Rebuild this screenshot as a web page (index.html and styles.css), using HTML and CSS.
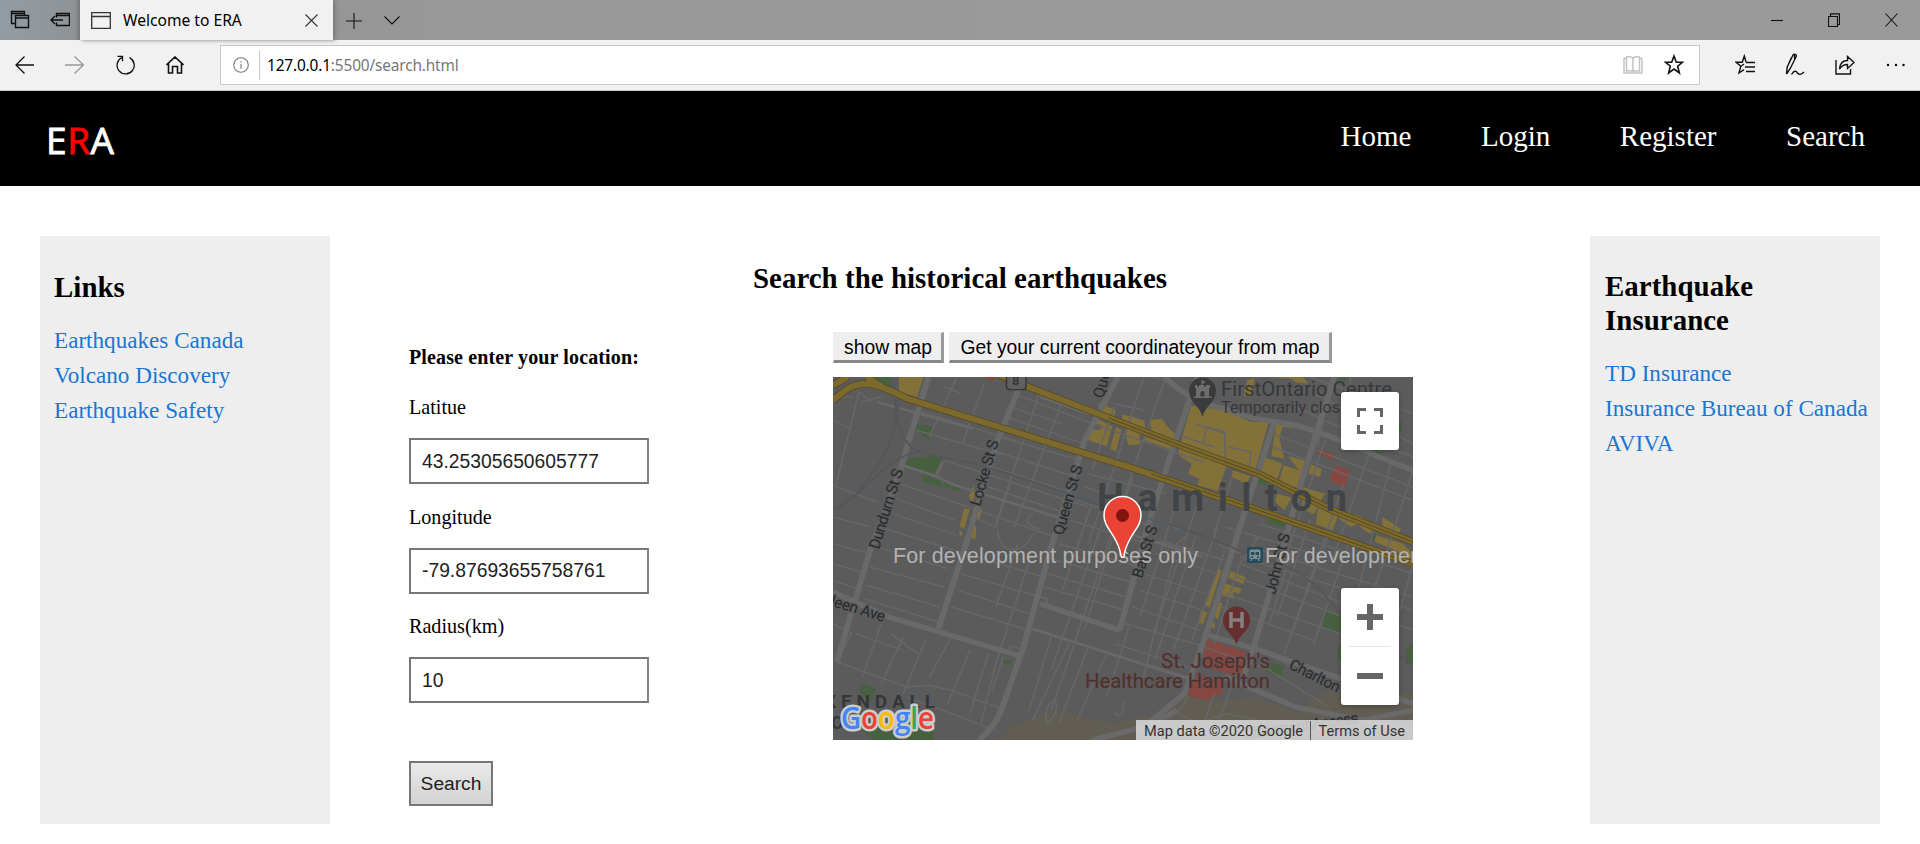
FILE: index.html
```html
<!DOCTYPE html>
<html lang="en">
<head>
<meta charset="utf-8">
<title>Welcome to ERA</title>
<link rel="stylesheet" href="styles.css">
</head>
<body>
<div class="tabbar">
  <div class="tab-tools">
    <svg width="20" height="20" viewBox="0 0 20 20" class="ico"><path d="M5 13.500H1.500V1.500H14.500V5M1.500 3.500H14.500M5.500 5.500H18.500V17.500H5.500ZM5.500 8H18.500" stroke-width="1.400"/></svg>
    <svg width="20" height="20" viewBox="0 0 20 20" class="ico"><path d="M6.500 7.500V3.500H19.500V15.500H6.500V12.500M6.500 5.500H19.500M1 10H13M5 6L1 10L5 14" stroke-width="1.400"/></svg>
  </div>
  <div class="tab">
    <svg width="20" height="17" viewBox="0 0 20 17" class="ico"><path d="M.7.7H19.300V16.300H.7ZM.7 4.500H19.300" stroke-width="1.300"/></svg>
    <span class="tab-title">Welcome to ERA</span>
    <svg width="13" height="13" viewBox="0 0 13 13" class="ico"><path d="M.5.5L12.500 12.500M12.500.5L.5 12.500"/></svg>
  </div>
  <svg width="16" height="16" viewBox="0 0 16 16" class="ico plus"><path d="M8 0V16M0 8H16"/></svg>
  <svg width="16" height="9" viewBox="0 0 16 9" class="ico chev"><path d="M.5.5L8 8L15.500.5"/></svg>
  <div class="win">
    <svg width="12" height="12" viewBox="0 0 12 12" class="ico"><path d="M0 6.500H12"/></svg>
    <svg width="12" height="14" viewBox="0 0 12 14" class="ico"><path d="M.5 3.500H9.500V13.500H.5ZM2.500 3.500V.9H11.500V11.500H9.500"/></svg>
    <svg width="13" height="14" viewBox="0 0 13 14" class="ico"><path d="M.5.5L12.500 13.500M12.500.5L.5 13.500"/></svg>
  </div>
</div>
<div class="toolbar">
  <div class="navkeys">
    <svg width="20" height="18" viewBox="0 0 20 18" class="ico"><path d="M.8 9H19M9.500.5L1 9L9.500 17.500" stroke-width="1.300"/></svg>
    <svg width="20" height="18" viewBox="0 0 20 18" class="ico dim"><path d="M0 9H18.200M9.500.5L18.500 9L9.500 17.500" stroke-width="1.300"/></svg>
    <svg width="20" height="20" viewBox="0 0 20 20" class="ico"><path d="M13.500 2.600A8.600 8.600 0 1 1 6 2.500M1.500 1.300H6.500V6.300" stroke-width="1.300"/></svg>
    <svg width="18" height="18" viewBox="0 0 18 18" class="ico"><path d="M.5 9L9 1L17.500 9M2.500 7.500V17H6.500V10.500H11.500V17H15.500V7.500" stroke-width="1.600"/></svg>
  </div>
  <div class="address">
    <svg width="16" height="16" viewBox="0 0 16 16" class="ico info"><circle cx="8" cy="8" r="7.300"/><path d="M8 7V12M8 4V5.500"/></svg>
    <span class="sep"></span>
    <span class="url"><b>127.0.0.1</b>:5500/search.html</span>
    <svg width="20" height="18" viewBox="0 0 20 18" class="ico book"><path d="M10 2V15M10 2C8 .7 5 .7 3.500 1V15C6 14.500 8 14.700 10 15.500C12 14.700 14 14.500 16.500 15V1C15 .7 12 .7 10 2M3.500 2.500H1V17H19V2.500H16.500"/></svg>
    <svg width="20" height="22" viewBox="0 0 20 22" class="ico star"><path d="M10 2L12.300 8.200H18.600L13.700 12.200L15.400 19L10 15.100L4.600 19L6.300 12.200L1.400 8.200H7.700Z" stroke-width="1.600"/></svg>
  </div>
  <div class="tools">
    <svg width="20" height="22" viewBox="0 0 20 22" class="ico"><path d="M11 8L9.300 2L7.300 8.300H1.200L5.800 12.300L4 19L9 15.700M11 8.500H20M10 13H20M11 17.500H20M6.500 12L9 10" stroke-width="1.400"/></svg>
    <svg width="20" height="24" viewBox="0 0 20 24" class="ico"><path d="M1.500 21L2.200 14L8 2C9 .5 12 1.500 11.200 3.500L5 16L1.500 21M6.500 4.500L3.500 11M9.500 2V6M6.500 21.500C9 17.500 11 17.500 12.500 20C14 22 16 22 19 19" stroke-width="1.400"/></svg>
    <svg width="20" height="20" viewBox="0 0 20 20" class="ico"><path d="M1 5V19H15.500V14M4.500 14C5 8 8 5.500 12.500 5.500V1.500L19 7.500L12.500 13.500V9.500C9 9.500 6.500 11 4.500 14Z" stroke-width="1.400"/></svg>
    <svg width="20" height="4" viewBox="0 0 20 4" class="dots"><circle cx="2" cy="2" r="1.200"/><circle cx="10" cy="2" r="1.200"/><circle cx="17.500" cy="2" r="1.200"/></svg>
  </div>
</div>
<header class="site">
  <div class="logo"><span>E</span><span class="red">R</span><span>A</span></div>
  <nav><a>Home</a><a>Login</a><a>Register</a><a>Search</a></nav>
</header>
<main>
  <aside class="left">
    <h2>Links</h2>
    <a>Earthquakes Canada</a><a>Volcano Discovery</a><a>Earthquake Safety</a>
  </aside>
  <section class="content">
    <h2 class="title">Search the historical earthquakes</h2>
    <div class="cols">
      <form>
        <p class="lead">Please enter your location:</p>
        <label>Latitue</label><input type="text" value="43.25305650605777">
        <label>Longitude</label><input type="text" value="-79.87693655758761">
        <label>Radius(km)</label><input type="text" value="10">
        <button type="button" class="go">Search</button>
      </form>
      <div class="mapcol">
        <div class="mapbtns"><button type="button" class="b1">show map</button><button type="button" class="b2">Get your current coordinateyour from map</button></div>
        <div class="map">
          <svg class="geo" width="580" height="363" viewBox="0 0 1568 1089" preserveAspectRatio="none">
            <rect width="1568" height="1089" fill="#5b5b5b"/>
            <g fill="#625d53">
              <path d="M450 1089L480 1050L590 1000L640 1010L760 1040L870 1010L960 950L1060 970L1150 960L1260 1010L1300 960L1400 920L1568 950V1089Z"/>
            </g>
            <g fill="#47603f">
              <path d="M93 0H158V32L130 25Z M228 140L268 150L262 190L222 160Z M192 262L210 242L297 236L280 298Z M245 292L290 312L295 330L240 312Z M300 314L318 320L315 333L298 327Z M322 325L344 332L338 343L320 337Z M458 845L482 850L480 865L460 858Z M78 918L115 932L105 975L72 945Z M1155 300L1180 310L1170 325L1140 315Z M1178 418L1225 430L1218 450L1172 438Z M1455 465L1470 470L1460 490L1450 485Z M1333 695L1375 720L1373 765L1325 750Z M1175 855L1220 865L1210 900L1170 885Z M1530 130L1540 140L1534 165H1525Z M1425 215L1490 222L1480 240L1440 232Z M1550 815L1568 800V865L1548 860Z M1363 815L1375 800V850H1363Z M1370 0H1390L1385 14L1368 8Z M130 1040L200 1025L270 1050L275 1089H110L60 1040Z"/>
            </g>
            <g fill="#83713a">
              <path d="M178 0H244L228 60L178 45Z"/>
              <path d="M720 78L765 100L755 128L715 112Z M706 122L755 148L740 208L690 190L697 155L720 160L728 145L702 138Z M765 150L780 158L765 222L749 216Z M783 112L840 130L845 150L828 175L832 200L800 206L790 175L797 150L780 140Z M858 128L890 126L905 150L925 172L922 190L860 165ZM845 180L915 205V218L842 190Z"/>
              <path d="M968 86L1060 100L1130 135L1178 135L1140 285L1060 245L940 195Z M935 210L1065 265L1040 342L985 325L990 305L960 290L970 260L935 235Z M1080 280L1130 298L1115 320L1078 300Z"/>
              <path d="M1120 10L1150 0H1140L1130 60L1110 55Z M1180 0H1270L1285 20L1250 15L1240 5Z M1200 130L1265 140L1272 155L1215 150L1207 185L1220 245L1185 238Z M1165 240L1215 260L1200 310L1155 285Z M1230 238L1275 250L1262 335L1205 315L1218 265L1260 280Z M1292 262L1320 275L1318 300L1285 290Z M1270 330L1330 350L1300 412L1268 395Z M1200 350L1240 362L1220 400L1195 375Z M1312 388L1370 405L1350 460L1305 442Z M1370 405L1420 415L1460 440L1455 470L1435 460L1420 440L1400 450L1368 425Z M1485 420L1535 455L1530 470L1485 450Z M1468 475L1540 500L1568 530V550L1500 510L1465 495Z"/>
              <path d="M380 325L385 350L375 380L368 355Z M393 395H403L395 430L384 422Z M354 395H370L355 455L342 448Z M378 445L388 450L385 487L371 480Z M342 463L350 465L348 478L341 474Z M1042 576L1050 580L1018 692L1006 685L1018 640Z M1075 582L1115 600L1110 622L1068 602Z M1062 620L1105 635L1098 650L1080 645L1085 665L1052 655L1055 628Z M1043 675L1052 680L1040 728L1033 720Z M995 700L1012 705L1000 742L988 735Z M1025 735L1034 740L1030 755L1022 750Z"/>
            </g>
            <g fill="#854740">
              <path d="M410 0H438L434 12L410 5Z M1308 215L1355 230L1350 250L1305 225Z M1358 265L1398 280L1382 332L1342 310Z M1010 788L1115 825L1110 890L1060 888L1000 865Z M985 890L1060 915L1050 950L1010 970L957 955Z"/>
            </g>
            <g class="minor">
              <path d="M0 60L55 60M0 130L50 155M70 45L8 325M105 75L70 45M75 75L130 60M240 105L560 215M225 160L460 235M300 250L690 390M180 320L340 380L600 480M170 365L330 430M160 410L335 475M140 455L330 520M120 510L310 575M100 570L300 630M90 625L290 690M85 665L285 735M390 425L440 450L480 320M0 325L120 375M0 420L100 450M0 500L100 530M0 560L90 590M0 610L80 640"/>
              <path d="M300 30L345 48M335 0L260 180M410 15L350 200M490 50L700 140M480 90L620 140M470 120L690 205M450 180L670 250M445 225L655 300M430 270L640 345M420 330L620 405M625 60L490 450M560 40L440 440M760 80L840 100M700 140L1000 255M690 290L900 350M680 330L880 400M660 370L870 450M640 430L850 500M610 500L830 570M590 545L820 620M580 590L810 665M570 630L790 700M360 530L570 600M345 590L560 660M340 640L545 715M320 690L530 760M530 755L960 900M840 590L1010 650M830 640L1000 700M810 690L990 760M790 740L980 800M760 800L960 870M880 490L1060 550M870 530L1040 590M880 430L940 460M1100 560L1568 760M1090 600L1380 720M1060 650L1370 770M1050 690L1300 790M1130 510L1568 660M1100 540L1568 700M1150 440L1568 590M1060 450L1300 530M1040 500L1100 530"/>
              <path d="M840 0L770 240L690 500M900 0L820 250L640 840L590 1000M810 300L740 540L680 760M945 320L830 720M1000 330L870 760L840 900M960 470L930 500L870 770M1040 450L920 820M980 480L870 850M1060 520L970 790M760 90L700 280M740 400L590 880M540 520L440 860L400 1040M700 380L620 640M500 500L440 690"/>
              <path d="M590 780L530 1000M640 795L540 1030M690 810L610 1040M740 830L660 1030M800 750L740 960M130 740L80 900M190 780L130 920M250 790L190 950M370 820L310 980M320 780L260 900M420 830L370 1010M460 840L430 940M155 770L230 830M60 770L190 820M0 740L50 770L10 850M10 855L200 930L260 925L320 940L455 995M200 960L440 1060M860 0L900 10M1000 0L960 60M1290 0L1568 110M1300 50L1568 200M1350 0L1310 210M1400 0L1370 200M1250 90L1450 190M1190 170L1568 330M1190 210L1568 370M1450 230L1350 550M1510 250L1420 640M1568 280L1460 650M1330 190L1200 620M1380 320L1280 640M1290 430L1200 720M1340 470L1240 770M1400 480L1300 800M1568 560L1500 830M1500 520L1460 640M1430 180L1568 240M1080 300L1030 470M1130 340L1050 600M1150 480L1100 560L1030 800M1240 520L1180 740M1300 580L1220 830M1180 830L1330 930M980 800L1180 880L1340 990M960 960L930 1010L990 1040L1060 1010L1150 1030M1030 950L1000 1050M1080 920L1040 1040M580 990C600 950 610 980 600 1010L580 1045L575 1020Z M540 410C520 420 520 450 560 455M445 460C450 540 520 530 540 470M760 1000C765 1030 790 1015 785 970M560 660L580 665L575 685M475 830L480 808L510 815M980 140L1060 170M950 180L1030 210M1000 200L1010 150L1060 165L1060 240M1070 210L1130 225L1125 270"/>
            </g>
            <g class="street">
              <path d="M180 262L278 298L297 252M278 298L330 325L620 425M560 60L690 110M900 0L960 55M540 755L960 905M380 155L120 75M800 470L1000 540"/>
            </g>
            <g class="major">
              <path d="M258 0L205 190L185 270L100 520L10 855M515 0L445 190L360 500L285 755M770 0L680 190L590 510L515 810L455 1000C445 1030 425 1060 395 1089M985 0L905 260L850 450L775 760M1195 130L1100 450L1050 630L1000 800L950 950L830 1060M1355 0L1270 300L1215 520L1140 800L1110 900M0 645L150 720L500 835M560 680L775 760M1000 770L1140 815L1320 885L1568 980M1060 900L1250 990L1568 1060M895 0C950 50 980 80 1060 95C1130 130 1180 130 1230 140C1350 170 1400 210 1568 280M700 1089L860 1045L930 1000M1250 1070L1568 1000"/>
            </g>
            <g class="rail"><path d="M165 0C165 200 200 220 290 240C500 280 650 370 870 430C960 455 1030 490 1110 525C1240 560 1310 610 1375 720M175 60C180 200 110 280 70 340M0 400C90 350 150 230 235 225M1400 800L1568 850"/></g>
            <path d="M610 335L710 375M800 405L950 460" stroke="#52616c" stroke-width="3" fill="none"/>
            <g class="hwy-edge"><path d="M0 70C60 10 90 0 200 65L800 270L1230 430L1568 560M430 -15L540 35L950 210L1150 290L1350 400L1568 495M0 25L40 0M90 0L140 35"/></g>
            <g class="hwy"><path d="M0 70C60 10 90 0 200 65L800 270L1230 430L1568 560M430 -15L540 35L950 210L1150 290L1350 400L1568 495M0 25L40 0M90 0L140 35"/></g>
            <path d="M745 123L950 210L1150 290L1350 400L1568 495M860 290L1230 430L1568 560" stroke="#5b4a24" stroke-width="3" fill="none"/>
            <path d="M469 -10V28Q470 38 480 38H511Q521 38 522 28V-10" fill="#606060" stroke="#363636" stroke-width="4"/>
          </svg>
          <svg class="labels" width="580" height="363" viewBox="0 0 580 363">
            <g class="place">
              <text x="264" y="134" font-size="38" textLength="250" class="city">Hamilton</text>
              <text x="-9" y="331" font-size="19" textLength="111" class="hood">KENDALL</text>
              <text x="-2" y="352" font-size="18" class="hood">O</text>
              <text x="388" y="19" font-size="19.500" textLength="171" lengthAdjust="spacingAndGlyphs">FirstOntario Centre</text>
              <text x="388" y="36" font-size="16.500" textLength="137" lengthAdjust="spacingAndGlyphs">Temporarily closed</text>
              <text x="179" y="8" font-size="13" font-weight="bold">8</text>
            </g>
            <g class="road">
              <text transform="translate(46 173) rotate(-73)" textLength="83">Dundurn St S</text>
              <text transform="translate(147 130) rotate(-74)" textLength="68">Locke St S</text>
              <text transform="translate(230 159) rotate(-74)" textLength="72">Queen St S</text>
              <text transform="translate(270 22) rotate(-74)">Que</text>
              <text transform="translate(309 202) rotate(-73)" textLength="54">Bay St S</text>
              <text transform="translate(442 218) rotate(-76)" textLength="62">John St S</text>
              <text transform="translate(-8 227) rotate(17)" textLength="61">deen Ave</text>
              <text transform="translate(455 291) rotate(27)" textLength="55">Charlton</text>
              <text transform="translate(412 362) rotate(-8)" textLength="115">Claremont Access</text>
            </g>
            <g class="hospital">
              <text x="437" y="291" text-anchor="end" textLength="109" lengthAdjust="spacingAndGlyphs">St. Joseph's</text>
              <text x="437" y="311" text-anchor="end" textLength="185" lengthAdjust="spacingAndGlyphs">Healthcare Hamilton</text>
            </g>
            <path d="M369.500 40C367 29 356 25 356 14A13.500 13.500 0 1 1 383 14C383 25 372 29 369.500 40Z" fill="#393b3d"/>
            <path d="M361 21V19.500H363V11H362V8H364V9.500H366V8H368.500V3L373 5L369.500 7V8H371V9.500H373V8H377V11H376V19.500H378.500V21ZM367.500 19.500H371.500V16A2 2 0 0 0 367.500 16Z" fill="#6e6e6e" fill-rule="evenodd"/>
            <path d="M403.500 268C401 257 390 254 390 243A13.500 13.500 0 1 1 417 243C417 254 406 257 403.500 268Z" fill="#652f2f"/>
            <path d="M398 235V251M409 235V251M398 243H409" stroke="#858080" stroke-width="3.500"/>
            <rect x="414" y="170" width="16" height="16" rx="2" fill="#244c5c"/>
            <path d="M418 172.500H426Q427.500 172.500 427.500 174V180.500Q427.500 182 426 182H418Q416.500 182 416.500 180.500V174Q416.500 172.500 418 172.500Z" fill="#7f8d93"/>
            <path d="M418 175H421.400V178H418ZM422.600 175H426V178H422.600ZM418 179.500H420V181H418ZM424 179.500H426V181H424Z" fill="#244c5c"/><path d="M419 182L417.500 184M425 182L426.500 184" stroke="#7f8d93" stroke-width="1.200"/>
            <g class="dev"><text x="60" y="186" textLength="305">For development purposes only</text><text x="432" y="186" textLength="305">For development purposes only</text></g>
            <path d="M289.500 180.500C288 180.500 288 179 287.500 176C283 156 271 152 271 138A18.500 18.500 0 1 1 308 138C308 152 296 156 291.500 176C291 179 291 180.500 289.500 180.500Z" fill="#ea4335" stroke="#fff" stroke-width="1.500"/>
            <circle cx="289.500" cy="138.500" r="6.500" fill="#7f1410"/>
            <g class="google"><text x="8" y="352" textLength="93" lengthAdjust="spacingAndGlyphs"><tspan fill="#4285f4">G</tspan><tspan fill="#ea4335">o</tspan><tspan fill="#fbbc05">o</tspan><tspan fill="#4285f4">g</tspan><tspan fill="#34a853">l</tspan><tspan fill="#ea4335">e</tspan></text></g>
          </svg>
          <div class="ctl full"><svg width="26" height="26" viewBox="0 0 26 26"><path d="M1.500 9V1.500H9M17 1.500H24.500V9M24.500 17V24.500H17M9 24.500H1.500V17" fill="none" stroke="#666" stroke-width="3"/></svg></div>
          <div class="ctl zoom"><svg width="58" height="117" viewBox="0 0 58 117"><path d="M16 29H42M29 16V42M16 88H42" stroke="#666" stroke-width="6"/><path d="M7 58.500H50" stroke="#e6e6e6"/></svg></div>
          <div class="credit"><span>Map data ©2020 Google</span><i></i><span>Terms of Use</span></div>
        </div>
      </div>
    </div>
  </section>
  <aside>
    <h2>Earthquake Insurance</h2>
    <a>TD Insurance</a><a>Insurance Bureau of Canada</a><a>AVIVA</a>
  </aside>
</main>
</body>
</html>
```
FILE: styles.css
```css
* { box-sizing: border-box; }
body { margin: 0; width: 1920px; height: 844px; overflow: hidden; background: #fff; color: #000; font-family: "Liberation Serif", serif; }
svg { display: block; flex: none; }
.ico { fill: none; stroke: #111; stroke-width: 1.1; }
.dim { stroke: #999; }

.tabbar { height: 40px; display: flex; align-items: center; background: linear-gradient(90deg, #939ca3 0, #8f9396 80px, #969696 340px, #999 500px, #9a9a9a); }
.tab-tools { width: 80px; height: 40px; padding-left: 10px; display: flex; gap: 20px; align-items: center; box-shadow: inset -5px 0 5px -4px #666; }
.tab { width: 253px; height: 40px; background: #f1f1f1; display: flex; align-items: center; padding-left: 11px; box-shadow: 2px 0 4px #777; }
.tab .ico { stroke: #333; }
.tab-title { font: 15.6px/20px "Noto Sans", "Open Sans", sans-serif; margin: -1px 0 0 12px; width: 182px; white-space: nowrap; }
.plus { margin: 1px 0 0 13px; }
.chev { margin-left: 22px; }
.win { margin-left: auto; display: flex; align-items: center; gap: 45px; padding-right: 22px; }

.toolbar { height: 51px; background: #f1f1f1; border-bottom: 1px solid #c8c8c8; display: flex; align-items: center; }
.navkeys { width: 220px; padding-left: 15px; display: flex; align-items: center; gap: 30.4px; }
.address { width: 1480px; height: 40px; background: #fff; border: 1px solid #c8c8c8; display: flex; align-items: center; padding-right: 15px; }
.info { margin-left: 12px; stroke: #777; }
.sep { width: 1px; height: 30px; background: #c8c8c8; margin: 0 7px 0 10px; }
.url { flex: 1; font: 15.4px/20px "Noto Sans", "Open Sans", sans-serif; letter-spacing: -.15px; color: #777; padding-top: 1px; }
.url b { font-weight: 400; color: #000; }
.book { stroke: #c4c4c4; stroke-width: 1.5; margin-right: 21px; }
.tools { display: flex; align-items: center; gap: 30px; padding-left: 35px; }
.dots { margin-left: 1px; }

.site { height: 95px; background: #000; color: #fff; display: flex; justify-content: space-between; padding: 0 55px 0 46px; }
.logo { font: 37px/50px "Comic Sans MS", "Open Sans", sans-serif; padding-top: 24px; letter-spacing: .6px; -webkit-text-stroke: .9px currentColor; }
.red { color: #f00; }
.site nav { display: flex; gap: 69.6px; font-size: 29px; line-height: 34px; padding-top: 28px; }

main { display: flex; padding: 50px 40px 0; }
aside { width: 290px; height: 588px; background: #eee; padding: 33px 0 0 15px; flex: none; }
.left { padding: 34px 0 0 14px; }
h2 { font-size: 28.9px; line-height: 34px; margin: 0 0 19px; letter-spacing: .04px; }
aside h2 { width: 200px; }
aside a { display: block; font-size: 23.15px; line-height: 35px; color: #1976d2; white-space: nowrap; }
.content { flex: 1; }
.title { text-align: center; margin: 25px 0 0; }
.cols { display: flex; padding-left: 79px; }
form { width: 424px; padding-top: 50px; display: flex; flex-direction: column; align-items: flex-start; }
.lead { font-weight: bold; font-size: 20px; line-height: 24px; margin: 0 0 26px; letter-spacing: .13px; }
label { font-size: 20.15px; line-height: 24px; margin-bottom: 19px; }
input { width: 240px; height: 46px; margin: 0 0 20.5px; padding: 1px 11px 0; border: 2px solid #777; border-color: #777 #858585 #777 #777; font: 19.3px "Liberation Sans", sans-serif; color: #222; }
.go { width: 84px; height: 45px; margin-top: 37px; padding: 1px 0 0; border: 2px solid #777; background: linear-gradient(#eaeaea, #d2d2d2); font: 19.2px "Liberation Sans", sans-serif; color: #222; }
.mapbtns { display: flex; gap: 5px; padding-top: 37px; margin-bottom: 14px; }
.mapbtns button { height: 31px; padding: 2px 0 0 1px; background: #eee; border-style: solid; border-width: 1px 3px 3px 1px; border-color: #eee #999 #888 #eee; font: 19.3px "Liberation Sans", sans-serif; color: #000; white-space: nowrap; }
.b1 { width: 111px; }
.b2 { width: 383px; }

.map { position: relative; width: 580px; height: 363px; overflow: hidden; }
.minor, .street, .major, .rail, .hwy, .hwy-edge { fill: none; stroke-linejoin: round; }
.minor { stroke: #666; stroke-width: 4.5; }
.street { stroke: #686868; stroke-width: 8; }
.major { stroke: #696969; stroke-width: 16; }
.rail { stroke: #53565b; stroke-width: 5; }
.hwy-edge { stroke: #5b4a24; stroke-width: 22; }
.hwy { stroke: #7b6a2c; stroke-width: 17; }
.labels { position: absolute; left: 0; top: 0; font-family: Roboto, sans-serif; }
.place { fill: #35383a; }
.city { fill: #414446; font-weight: 700; }
.hood { fill: #34373a; font-weight: 700; }
.road { fill: #282b2e; font-size: 15.5px; stroke: #5b5b5b; stroke-width: 2; paint-order: stroke; }
.hospital { fill: #4b3230; font-size: 20px; stroke: #66504e; stroke-width: 1; paint-order: stroke; }
.dev { fill: #b2b2b2; font-family: "Liberation Sans", sans-serif; font-size: 21.5px; }
.google { font: 600 30px "Open Sans", sans-serif; stroke: #ccc; stroke-width: 5; stroke-linejoin: round; paint-order: stroke; }
.ctl { position: absolute; left: 508px; width: 58px; background: #fff; border-radius: 3px; box-shadow: 0 1px 4px rgba(0,0,0,.3); }
.full { top: 15px; height: 58px; padding: 16px; }
.zoom { top: 211px; height: 117px; }
.credit { position: absolute; right: 0; bottom: 0; width: 277px; height: 20px; background: rgba(224,224,224,.82); display: flex; align-items: center; justify-content: space-between; padding: 2px 8px 0; font: 14.6px/20px Roboto, sans-serif; color: #333; }
.credit i { width: 1px; height: 20px; background: #555; }
```
